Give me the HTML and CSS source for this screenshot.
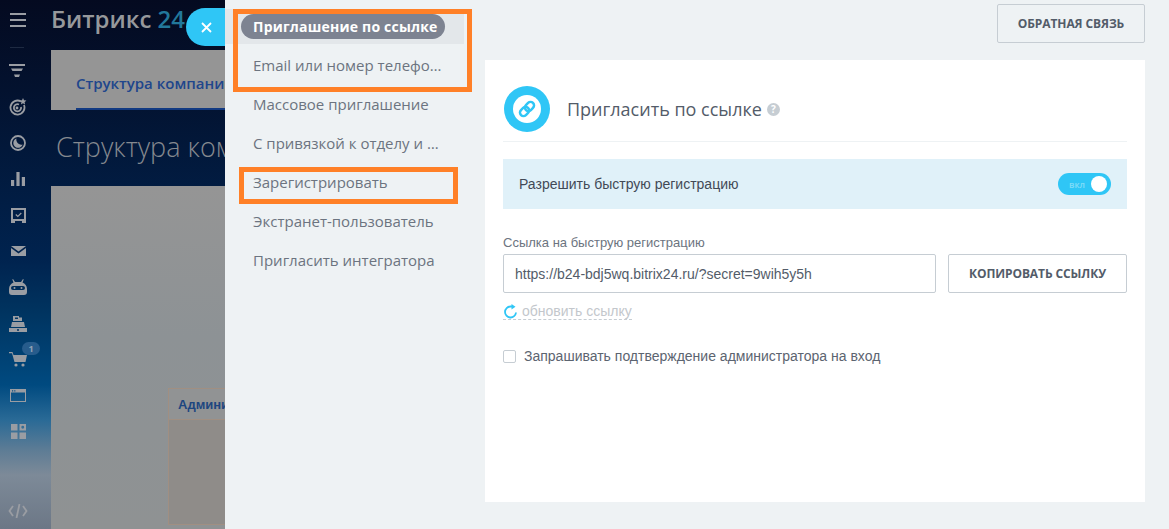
FILE: index.html
```html
<!DOCTYPE HTML>
<html>
<head>
    <title>Пригласить сотрудников</title>
    <meta charset="UTF-8">
    <link rel="stylesheet" href="styles.css">
</head>
<body>
    <div class="portal">
        <nav class="rail">
            <svg class="rail-menu" width="16" height="14" viewBox="0 0 16 14"><path d="M0 0h16v2H0zM0 6h16v2H0zM0 12h16v2H0z"/></svg>
            <div class="rail-line"></div>
            <ul class="rail-icons">
                <li><svg width="18" height="14" viewBox="0 0 18 14"><path d="M0 0h16v2H0zM2 4.500h12L12.500 7h-9zM5 10.500h6l-1 2.500H6z"/></svg></li>
                <li><svg width="18" height="18" viewBox="0 0 18 18"><path class="ring" d="M12 3.500A7 7 0 1 0 15 7"/><path class="ring" d="M10 6.500A3.600 3.600 0 1 0 12 9"/><circle cx="8" cy="10" r="1.400"/><path d="M14 0l1 2.300 2.400.3-1.800 1.600.5 2.300-2.100-1.200-2.100 1.200.5-2.300L10.600 2.600l2.400-.3z"/></svg></li>
                <li><svg width="16" height="16" viewBox="0 0 16 16"><circle class="ring" cx="8" cy="8" r="7"/><path d="M6.500 3.500A4.800 4.800 0 1 0 12.700 9.500 5 5 0 0 1 6.500 3.500z"/></svg></li>
                <li><svg width="14" height="14" viewBox="0 0 14 14"><path d="M0 8h3.200v6H0zM5.400 0h3.200v14H5.400zM10.800 5H14v9h-3.200z"/></svg></li>
                <li><svg width="15" height="15" viewBox="0 0 15 15"><path fill-rule="evenodd" d="M0 0h15v15H11v-2H4v2H0zm2 2v9h11V2z"/><path class="tick" d="M4.800 6.500l2 2 3.500-3.500"/></svg></li>
                <li><svg width="15" height="10" viewBox="0 0 15 10"><path d="M0 0h15L7.500 5.500zM0 2l7.500 5.500L15 2v8H0z"/></svg></li>
                <li><svg width="18" height="16" viewBox="0 0 18 16"><path fill-rule="evenodd" d="M4 0l2 3h6l2-3 .7.500L13.500 3.400C16 4.500 18 6.500 18 10v3c0 2-1 3-3 3H3c-2 0-3-1-3-3v-3c0-3.500 2-5.500 4.500-6.600L3.300.5zM4 7a2 2 0 0 0 0 4h10a2 2 0 0 0 0-4z"/><circle cx="5.500" cy="9" r="1"/><circle cx="12.500" cy="9" r="1"/></svg></li>
                <li><svg width="18" height="17" viewBox="0 0 18 17"><path fill-rule="evenodd" d="M0 13h18v4H0zM2 12l1-5h12l1 5zM4 1h6v1.500h3V6H4zM6 2.500v1.500h3V2.500z"/><circle class="hole" cx="9" cy="15" r="1"/></svg></li>
                <li class="rail-cart"><svg width="18" height="15" viewBox="0 0 18 15"><path d="M0 0h3.500l1 3H18l-1.500 7H5.500L3 1.200H0z"/><circle cx="7" cy="13" r="1.600"/><circle cx="14" cy="13" r="1.600"/></svg><span class="rail-badge">1</span></li>
                <li><svg width="16" height="13" viewBox="0 0 16 13"><path fill-rule="evenodd" d="M0 0h16v13H0zm1 3.600v8.400h14V3.600zM2 1.200v1.200h1.200V1.200zm2.200 0v1.200h1.200V1.200z"/></svg></li>
                <li><svg width="15" height="15" viewBox="0 0 15 15"><path d="M0 0h6.500v6.500H0zM0 8.500h6.500V15H0zM8.500 8.500H15V15H8.500z"/><path fill-rule="evenodd" d="M8.500 0H15v6.500H8.500zM10.300 3.250a1.450 1.450 0 1 0 2.900 0 1.450 1.450 0 1 0-2.900 0z"/></svg></li>
            </ul>
            <svg class="rail-code" width="20" height="14" viewBox="0 0 20 14"><path class="ring" d="M5 2L1.500 7 5 12M15 2l3.500 5L15 12M11.500 0L8.500 14"/></svg>
        </nav>
        <div class="portal-main">
            <div class="portal-top">Битрикс <span>24</span></div>
            <div class="portal-tabs"><span class="portal-tab">Структура компании</span></div>
            <div class="portal-title">Структура компании</div>
            <div class="portal-body">
                <div class="dept">
                    <div class="dept-head">Администрация</div>
                </div>
            </div>
        </div>
    </div>

    <div class="slider">
        <button class="slider-close">
            <svg width="11" height="11" viewBox="0 0 11 11"><path d="M1 1l9 9M10 1l-9 9"/></svg>
        </button>

        <ul class="invite-menu">
            <li class="active"><span>Приглашение по ссылке</span></li>
            <li><span>Email или номер телефона</span></li>
            <li><span>Массовое приглашение</span></li>
            <li><span>С привязкой к отделу и доступом</span></li>
            <li><span>Зарегистрировать</span></li>
            <li><span>Экстранет-пользователь</span></li>
            <li><span>Пригласить интегратора</span></li>
        </ul>

        <div class="invite-main">
            <div class="invite-top">
                <button class="btn">Обратная связь</button>
            </div>
            <div class="card">
                <div class="card-head">
                    <div class="card-icon">
                        <svg width="28" height="28" viewBox="0 0 28 28"><circle cx="14" cy="14" r="14" fill="#fff"/><g transform="rotate(-45 14 14)"><rect x="5.500" y="10.500" width="10" height="7" rx="3.500"/><rect x="12.500" y="10.500" width="10" height="7" rx="3.500"/></g></svg>
                    </div>
                    <h2>Пригласить по ссылке</h2>
                    <span class="hint">?</span>
                </div>
                <div class="fast-reg">
                    <span>Разрешить быструю регистрацию</span>
                    <span class="toggle"><em>вкл</em><i></i></span>
                </div>
                <label class="field-label">Ссылка на быструю регистрацию</label>
                <div class="link-row">
                    <div class="link-input">https://b24-bdj5wq.bitrix24.ru/?secret=9wih5y5h</div>
                    <button class="btn btn-copy">Копировать ссылку</button>
                </div>
                <a class="refresh">
                    <svg width="15" height="15" viewBox="0 0 15 15"><path d="M13 8.500A5.500 5.500 0 1 1 7.500 2.500H10"/><path class="refresh-tip" d="M8.500 0l4 2.800-4 2.800z"/></svg>
                    обновить ссылку
                </a>
                <div class="confirm">
                    <span class="checkbox"></span>
                    Запрашивать подтверждение администратора на вход
                </div>
            </div>
        </div>

        <div class="mark mark-first"></div>
        <div class="mark mark-second"></div>
    </div>
</body>
</html>
```

FILE: styles.css
```css
html, body{
    margin: 0;
    height: 100%;
}

body{
    position: relative;
    width: 100%;
    height: 529px;
    overflow: hidden;
    font-family: "Open Sans", sans-serif;
    background: #8e9294;
}

ul{
    margin: 0;
    padding: 0;
    list-style: none;
}

button{
    font-family: inherit;
    cursor: pointer;
}

.portal{
    display: flex;
    height: 529px;
    background: linear-gradient(180deg, #040a20 0, #03122f 90px, #00234f 260px, #00335f 310px, #004a80 385px, #2a6a96 420px, #5d7c95 450px, #7d8a98 475px, #6c7786 529px);
}

.rail{
    width: 51px;
    flex: none;
    display: flex;
    flex-direction: column;
    fill: #9a9da3;
}

.rail-menu{
    margin: 13px 0 0 10px;
}

.rail-line{
    width: 14px;
    height: 1px;
    margin: 20px 0 0 10px;
    background: #1e2a42;
}

.rail-icons{
    margin-top: 5px;
}

.rail-icons li{
    position: relative;
    height: 36px;
    display: flex;
    align-items: center;
    justify-content: center;
    padding-right: 15px;
}

.ring{
    fill: none;
    stroke: #9a9da3;
    stroke-width: 1.800;
}

.tick{
    fill: none;
    stroke: #9a9da3;
    stroke-width: 1.200;
}

.hole{
    fill: #00335f;
}

.rail-badge{
    position: absolute;
    top: 1px;
    left: 22px;
    width: 18px;
    height: 13px;
    border-radius: 7px;
    background: #275c8c;
    color: #8fa3b5;
    font-size: 9px;
    font-weight: 700;
    line-height: 13px;
    text-align: center;
}

.rail-code{
    margin: auto 0 11px 8px;
}

.portal-main{
    flex: 1;
    min-width: 0;
    display: flex;
    flex-direction: column;
}

.portal-top{
    height: 50px;
    box-sizing: border-box;
    font-size: 24px;
    font-weight: 600;
    line-height: 38px;
    color: #96989b;
}

.portal-top span{
    color: #22789a;
}

.portal-tabs{
    height: 60px;
    box-sizing: border-box;
    padding-left: 25px;
    background: #959595;
    line-height: 66px;
}

.portal-tab{
    display: inline-block;
    height: 58px;
    border-bottom: 2px solid #123a82;
    font-size: 15px;
    font-weight: 600;
    color: #20468c;
    white-space: nowrap;
}

.portal-title{
    height: 76px;
    padding-left: 5px;
    font-size: 27px;
    font-weight: 300;
    line-height: 74px;
    color: #85898f;
    white-space: nowrap;
}

.portal-body{
    flex: 1;
    padding: 202px 0 0 117px;
    background: linear-gradient(180deg, #959595 0, #8d9295 150px, #8f9293 343px);
}

.dept{
    height: 135px;
    border: 1px solid #a08f82;
    background: #8f8c89;
}

.dept-head{
    height: 30px;
    padding-left: 9px;
    border-bottom: 1px solid #a08f82;
    background: #919394;
    font-family: "Liberation Sans", sans-serif;
    font-size: 13px;
    font-weight: 700;
    line-height: 31px;
    color: #1e4680;
    white-space: nowrap;
}

.slider{
    position: absolute;
    top: 0;
    left: 225px;
    right: 0;
    bottom: 0;
    display: flex;
    background: #eef2f4;
}

.slider-close{
    position: absolute;
    top: 8px;
    left: -39px;
    width: 39px;
    height: 38px;
    padding: 0 0 0 1px;
    border: none;
    border-radius: 19px 0 0 19px;
    background: #2fc6f6;
}

.slider-close svg{
    display: block;
    margin: 0 auto;
    fill: none;
    stroke: #fff;
    stroke-width: 1.800;
}

.invite-menu{
    width: 260px;
    flex: none;
    padding-top: 9px;
}

.invite-menu li{
    height: 35px;
    margin-bottom: 4px;
    padding-left: 28px;
    font-size: 15px;
    line-height: 35px;
    color: #6c7480;
}

.invite-menu li span{
    display: block;
    width: 189px;
    overflow: hidden;
    white-space: nowrap;
    text-overflow: ellipsis;
}

.invite-menu .active{
    width: 239px;
    padding: 5px 0 0 16px;
    box-sizing: border-box;
    background: #e3e7ea;
}

.invite-menu .active span{
    width: 204px;
    height: 25px;
    box-sizing: border-box;
    padding-left: 12px;
    border-radius: 13px;
    background: #7d8391;
    font-size: 14px;
    font-weight: 700;
    letter-spacing: 0.2px;
    line-height: 25px;
    color: #fff;
}

.invite-main{
    width: 660px;
    flex: none;
}

.invite-top{
    height: 60px;
    box-sizing: border-box;
    padding-top: 4px;
    text-align: right;
}

.btn{
    width: 148px;
    height: 39px;
    padding: 0;
    border: 1px solid #c6cdd3;
    border-radius: 2px;
    background: transparent;
    font-size: 12px;
    font-weight: 700;
    letter-spacing: -0.1px;
    color: #535c69;
    text-transform: uppercase;
}

.card{
    height: 442px;
    box-sizing: border-box;
    padding: 26px 18px 0;
    background: #fff;
}

.card-head{
    height: 55px;
    display: flex;
    align-items: flex-start;
    margin-bottom: 17px;
    border-bottom: 1px solid #eef2f4;
}

.card-icon{
    width: 46px;
    height: 46px;
    margin-left: 1px;
    flex: none;
    display: flex;
    align-items: center;
    justify-content: center;
    border-radius: 50%;
    background: #2fc6f6;
}

.card-icon rect{
    fill: none;
    stroke: #2fc6f6;
    stroke-width: 2.500;
}

.card-head h2{
    margin: 0 0 0 17px;
    font-size: 18px;
    font-weight: 400;
    line-height: 46px;
    color: #535c69;
    white-space: nowrap;
}

.hint{
    width: 13px;
    height: 13px;
    margin: 17px 0 0 5px;
    border-radius: 50%;
    background: #c6cdd3;
    font-size: 10px;
    font-weight: 700;
    line-height: 13px;
    text-align: center;
    color: #fff;
}

.fast-reg{
    height: 50px;
    display: flex;
    align-items: center;
    justify-content: space-between;
    padding: 0 16px;
    background: #e0f1f9;
    font-family: "Liberation Sans", sans-serif;
    font-size: 14px;
    color: #424956;
}

.toggle{
    width: 53px;
    height: 22px;
    box-sizing: border-box;
    display: flex;
    align-items: center;
    justify-content: space-between;
    padding: 0 4px 0 11px;
    border-radius: 11px;
    background: #2fc6f6;
}

.toggle em{
    font-family: "Open Sans", sans-serif;
    font-size: 9px;
    font-style: normal;
    font-weight: 600;
    color: #80dcf8;
}

.toggle i{
    width: 16px;
    height: 16px;
    border-radius: 50%;
    background: #fff;
}

.field-label{
    display: block;
    margin-top: 26px;
    font-family: "Liberation Sans", sans-serif;
    font-size: 13px;
    line-height: 16px;
    color: #6c7480;
}

.link-row{
    display: flex;
    gap: 12px;
    margin-top: 3px;
}

.link-input{
    width: 433px;
    height: 39px;
    box-sizing: border-box;
    padding-left: 11px;
    border: 1px solid #c6cdd3;
    border-radius: 2px;
    font-family: "Liberation Sans", sans-serif;
    font-size: 14px;
    line-height: 39px;
    color: #535c69;
}

.btn-copy{
    width: 179px;
}

.refresh{
    display: flex;
    width: 129px;
    align-items: flex-end;
    gap: 4px;
    height: 26px;
    border-bottom: 1px dashed #c6cdd3;
    font-family: "Liberation Sans", sans-serif;
    font-size: 14px;
    line-height: 16px;
    color: #c3c7cc;
}

.refresh svg{
    fill: none;
    stroke: #2fc6f6;
    stroke-width: 1.800;
}

.refresh-tip{
    fill: #2fc6f6;
    stroke: none;
}

.confirm{
    display: flex;
    align-items: center;
    gap: 8px;
    margin-top: 28px;
    font-family: "Liberation Sans", sans-serif;
    font-size: 14px;
    line-height: 16px;
    color: #5c6470;
}

.checkbox{
    width: 11px;
    height: 11px;
    border: 1px solid #c6cdd3;
    border-radius: 2px;
}

.mark{
    position: absolute;
    box-sizing: border-box;
    border: 5px solid #ff8027;
}

.mark-first{
    top: 9px;
    left: 8px;
    width: 239px;
    height: 83px;
}

.mark-second{
    top: 167px;
    left: 14px;
    width: 219px;
    height: 37px;
}
```
